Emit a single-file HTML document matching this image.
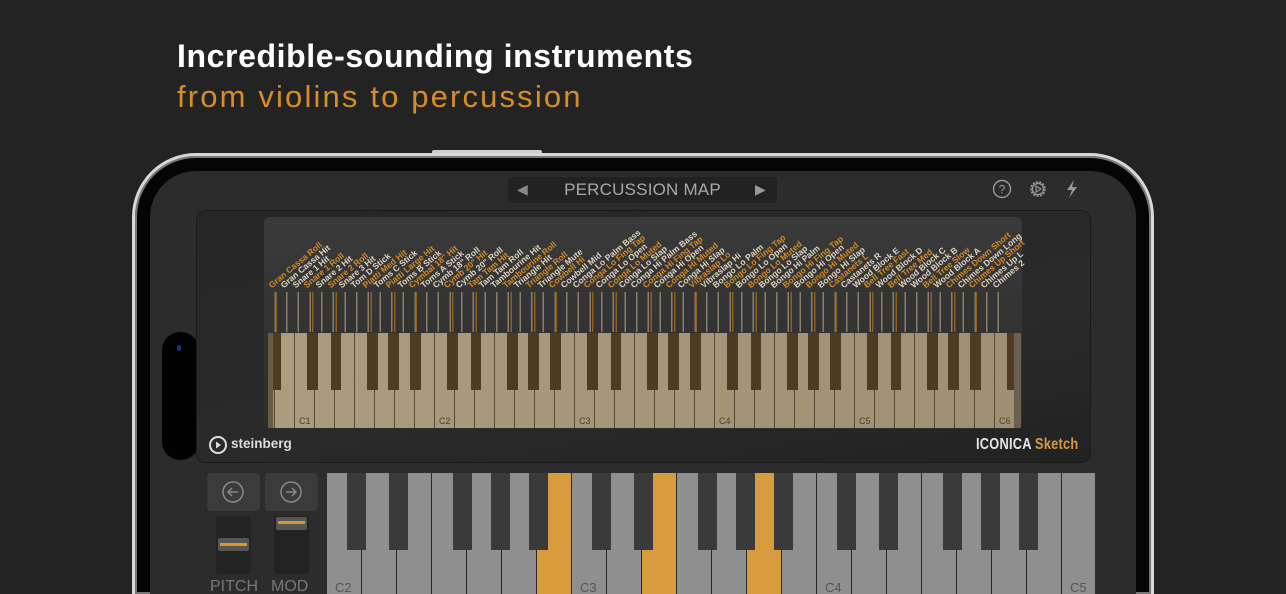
<!DOCTYPE html>
<html><head><meta charset="utf-8"><style>
*{margin:0;padding:0;box-sizing:border-box}
html,body{width:1286px;height:594px;overflow:hidden}
body{background:#232323;font-family:"Liberation Sans",sans-serif;position:relative}
.abs{position:absolute}
h1{position:absolute;left:177px;top:38px;font-size:32px;font-weight:bold;color:#fff;letter-spacing:0.6px}
h2{position:absolute;left:177px;top:79px;font-size:31px;font-weight:normal;color:#d68e25;letter-spacing:2.15px}
.frame{left:132px;top:153px;width:1022px;height:441px;border-radius:64px 64px 0 0;border:3px solid #d8d8dc;border-bottom:none;background:#050505;box-shadow:inset 0 0 0 2px #777}
.screen{left:150px;top:171px;width:986px;height:423px;border-radius:46px 46px 0 0;background:#2c2c2c}
.lbl{position:absolute;font-size:8.6px;font-weight:bold;white-space:nowrap;transform-origin:0 100%;transform:rotate(-40deg);line-height:9px}
.o{color:#d38a22}.w{color:#ddd3bd}
.note{position:absolute;font-size:9px;color:#4b3e2c;top:416px}
.bnote{position:absolute;font-size:13px;color:#555;top:581px;line-height:13px}
</style></head><body>
<h1>Incredible-sounding instruments</h1>
<h2>from violins to percussion</h2>
<div class="abs" style="left:432px;top:150px;width:110px;height:4px;background:#cfcfd3;border-radius:2px"></div>
<div class="abs frame"></div>
<div class="abs screen"></div>
<div class="abs" style="left:162px;top:332px;width:37px;height:128px;background:#020202;border-radius:18px"></div>
<div class="abs" style="left:177px;top:345px;width:4px;height:6px;background:#1d2f80;border-radius:2px"></div>
<!-- header -->
<div class="abs" style="left:508px;top:177px;width:269px;height:26px;background:#222;border-radius:3px"></div>
<div class="abs" style="left:517px;top:181px;color:#888;font-size:14px">◀</div>
<div class="abs" style="left:755px;top:181px;color:#999;font-size:14px">▶</div>
<div class="abs" style="left:508px;top:180px;width:269px;text-align:center;color:#a8a8a8;font-size:17px;letter-spacing:0.2px">PERCUSSION MAP</div>
<svg class="abs" style="left:990px;top:178px" width="95" height="22" viewBox="0 0 95 22">
<circle cx="12" cy="11" r="8.5" fill="none" stroke="#999" stroke-width="1.4"/>
<text x="12" y="15.5" font-size="12" fill="#999" text-anchor="middle" font-family="Liberation Sans">?</text>
<circle cx="48" cy="11" r="7" fill="none" stroke="#999" stroke-width="1.6" stroke-dasharray="2.2 1.2"/>
<circle cx="48" cy="11" r="5.5" fill="none" stroke="#999" stroke-width="1.2"/>
<path d="M46 8 L51 11 L46 14 Z" fill="none" stroke="#999" stroke-width="1.1"/>
<path d="M84 2 L77 12 L82 12 L79 20 L87 9 L82 9 Z" fill="#999"/>
</svg>
<!-- instrument panel -->
<div class="abs" style="left:196px;top:210px;width:895px;height:253px;background:linear-gradient(170deg,#262626,#2a2a2a 60%,#222);border-radius:10px;border:1px solid #1a1a1a"></div>
<div class="abs" style="left:264px;top:217px;width:758px;height:212px;background:linear-gradient(#3a3a3a,#333 50%,#2e2e2e);border-radius:6px"></div>
<!-- ticks -->
<div class="abs" style="left:269px;top:292px;width:736px;height:40px;background:repeating-linear-gradient(90deg,transparent 0,transparent 5.33px,#8a7f6c 5.33px,#8a7f6c 6.83px,transparent 6.83px,transparent 11.667px)"></div>
<div class="abs" style="left:268px;top:292px;width:740px;height:40px;background-image:linear-gradient(90deg,transparent 0,transparent 18px,#9a6418 18px,#9a6418 19.5px,transparent 19.5px,transparent 41.5px,#9a6418 41.5px,#9a6418 43px,transparent 43px,transparent 76.5px,#9a6418 76.5px,#9a6418 78px,transparent 78px,transparent 99.8px,#9a6418 99.8px,#9a6418 101.3px,transparent 101.3px,transparent 121.5px,#9a6418 121.5px,#9a6418 123px,transparent 123px);background-size:140px 40px;background-position:-114px 0;background-repeat:repeat-x;opacity:.9"></div>
<!-- upper keyboard -->
<div class="abs" style="left:268px;top:333px;width:752px;height:95px;background:#9b8a6e"></div>
<div class="abs" style="left:274px;top:333px;width:742px;height:95px;background-image:repeating-linear-gradient(90deg,#5a4a34 0,#5a4a34 1px,transparent 1px,transparent 20px),linear-gradient(90deg,#ac9c7e,#a09073);background-position:0 0"></div>
<div class="abs" style="left:268px;top:333px;width:748px;height:57px;background-image:linear-gradient(90deg,transparent 0,transparent 13px,#4d3b22 13px,#4d3b22 24px,transparent 24px,transparent 37px,#4d3b22 37px,#4d3b22 47px,transparent 47px,transparent 73px,#4d3b22 73px,#4d3b22 84px,transparent 84px,transparent 94px,#4d3b22 94px,#4d3b22 105px,transparent 105px,transparent 116px,#4d3b22 116px,#4d3b22 127px,transparent 127px);background-size:140px 57px;background-position:26px 0;background-repeat:repeat-x"></div>
<div class="abs" style="left:268px;top:333px;width:5px;height:95px;background:#6b5a42"></div>
<div class="abs" style="left:1014px;top:333px;width:7px;height:95px;background:#6b6050"></div>
<span class="note" style="left:299px">C1</span><span class="note" style="left:439px">C2</span><span class="note" style="left:579px">C3</span><span class="note" style="left:719px">C4</span><span class="note" style="left:859px">C5</span><span class="note" style="left:999px">C6</span>
<!-- labels -->
<div id="labels">
<span class="lbl o" style="left:273px;top:281px">Gran Cassa Roll</span>
<span class="lbl w" style="left:285px;top:281px">Gran Cassa Hit</span>
<span class="lbl w" style="left:297px;top:281px">Snare 1 Hit</span>
<span class="lbl o" style="left:308px;top:281px">Snare 1 Roll</span>
<span class="lbl w" style="left:320px;top:281px">Snare 2 Hit</span>
<span class="lbl o" style="left:332px;top:281px">Snare 2 Roll</span>
<span class="lbl w" style="left:343px;top:281px">Snare 3 Hit</span>
<span class="lbl w" style="left:355px;top:281px">Tom D Stick</span>
<span class="lbl o" style="left:367px;top:281px">Piatti Med Hit</span>
<span class="lbl w" style="left:378px;top:281px">Toms C Stick</span>
<span class="lbl o" style="left:390px;top:281px">Piatti Large Hit</span>
<span class="lbl w" style="left:402px;top:281px">Toms B Stick</span>
<span class="lbl o" style="left:413px;top:281px">Cymbal 18" Hit</span>
<span class="lbl w" style="left:425px;top:281px">Toms A Stick</span>
<span class="lbl w" style="left:437px;top:281px">Cymb 18" Roll</span>
<span class="lbl o" style="left:448px;top:281px">Cymb 20" Hit</span>
<span class="lbl w" style="left:460px;top:281px">Cymb 20" Roll</span>
<span class="lbl o" style="left:472px;top:281px">Tam Tam Hit</span>
<span class="lbl w" style="left:483px;top:281px">Tam Tam Roll</span>
<span class="lbl w" style="left:495px;top:281px">Tambourine Hit</span>
<span class="lbl o" style="left:507px;top:281px">Tambourine Roll</span>
<span class="lbl w" style="left:518px;top:281px">Triangle Hit</span>
<span class="lbl o" style="left:530px;top:281px">Triangle Roll</span>
<span class="lbl w" style="left:542px;top:281px">Triangle Mute</span>
<span class="lbl o" style="left:553px;top:281px">Cowbell Hi</span>
<span class="lbl w" style="left:565px;top:281px">Cowbell Mid</span>
<span class="lbl w" style="left:577px;top:281px">Conga Lo Palm Bass</span>
<span class="lbl o" style="left:588px;top:281px">Conga Lo Fing Tap</span>
<span class="lbl w" style="left:600px;top:281px">Conga Lo Open</span>
<span class="lbl o" style="left:612px;top:281px">Conga Lo Muted</span>
<span class="lbl w" style="left:623px;top:281px">Conga Lo Slap</span>
<span class="lbl w" style="left:635px;top:281px">Conga Hi Palm Bass</span>
<span class="lbl o" style="left:647px;top:281px">Conga Hi Fing Tap</span>
<span class="lbl w" style="left:658px;top:281px">Conga Hi Open</span>
<span class="lbl o" style="left:670px;top:281px">Conga Hi Muted</span>
<span class="lbl w" style="left:682px;top:281px">Conga Hi Slap</span>
<span class="lbl o" style="left:693px;top:281px">Vibraslap Lo</span>
<span class="lbl w" style="left:705px;top:281px">Vibraslap Hi</span>
<span class="lbl w" style="left:717px;top:281px">Bongo Lo Palm</span>
<span class="lbl o" style="left:728px;top:281px">Bongo Lo Fing Tap</span>
<span class="lbl w" style="left:740px;top:281px">Bongo Lo Open</span>
<span class="lbl o" style="left:752px;top:281px">Bongo Lo Muted</span>
<span class="lbl w" style="left:763px;top:281px">Bongo Lo Slap</span>
<span class="lbl w" style="left:775px;top:281px">Bongo Hi Palm</span>
<span class="lbl o" style="left:787px;top:281px">Bongo Hi Fing Tap</span>
<span class="lbl w" style="left:798px;top:281px">Bongo Hi Open</span>
<span class="lbl o" style="left:810px;top:281px">Bongo Hi Muted</span>
<span class="lbl w" style="left:822px;top:281px">Bongo Hi Slap</span>
<span class="lbl o" style="left:833px;top:281px">Castanets L</span>
<span class="lbl w" style="left:845px;top:281px">Castanets R</span>
<span class="lbl w" style="left:857px;top:281px">Wood Block E</span>
<span class="lbl o" style="left:868px;top:281px">Bell Tree Fast</span>
<span class="lbl w" style="left:880px;top:281px">Wood Block D</span>
<span class="lbl o" style="left:892px;top:281px">Bell Tree Med</span>
<span class="lbl w" style="left:903px;top:281px">Wood Block C</span>
<span class="lbl w" style="left:915px;top:281px">Wood Block B</span>
<span class="lbl o" style="left:927px;top:281px">Bell Tree Slow</span>
<span class="lbl w" style="left:938px;top:281px">Wood Block A</span>
<span class="lbl o" style="left:950px;top:281px">Chimes Down Short</span>
<span class="lbl w" style="left:962px;top:281px">Chimes Down Long</span>
<span class="lbl o" style="left:973px;top:281px">Chimes Up Short</span>
<span class="lbl w" style="left:985px;top:281px">Chimes Up L</span>
<span class="lbl w" style="left:997px;top:281px">Chimes 2</span>
</div>
<!-- logos -->
<svg class="abs" style="left:208px;top:435px" width="20" height="20"><circle cx="10" cy="10" r="8" fill="none" stroke="#ddd" stroke-width="2"/><path d="M8 6.5 L13 10 L8 13.5Z" fill="#ddd"/></svg>
<div class="abs" style="left:231px;top:436px;color:#ddd;font-size:13.5px;font-weight:bold">steinberg</div>
<div class="abs" style="left:976px;top:436px;font-size:16px;font-weight:bold;color:#e6e6e6;transform:scaleX(0.8);transform-origin:0 0;letter-spacing:0.3px;white-space:nowrap">ICONICA <span style="color:#d69a3f">Sketch</span></div>
<!-- controls -->
<div class="abs" style="left:207px;top:473px;width:53px;height:38px;background:#3b3b3b;border-radius:4px"></div>
<div class="abs" style="left:265px;top:473px;width:53px;height:38px;background:#3b3b3b;border-radius:4px"></div>
<svg class="abs" style="left:221px;top:480px" width="90" height="24"><circle cx="12" cy="12" r="10" fill="none" stroke="#888" stroke-width="1.5"/><path d="M17 12H7M11 8L7 12L11 16" fill="none" stroke="#888" stroke-width="1.5"/><circle cx="70" cy="12" r="10" fill="none" stroke="#888" stroke-width="1.5"/><path d="M65 12H75M71 8L75 12L71 16" fill="none" stroke="#888" stroke-width="1.5"/></svg>
<div class="abs" style="left:216px;top:516px;width:35px;height:58px;background:#232323;border-radius:3px"></div>
<div class="abs" style="left:274px;top:516px;width:35px;height:58px;background:#232323;border-radius:3px"></div>
<div class="abs" style="left:218px;top:538px;width:31px;height:13px;background:#555;border-radius:2px"></div>
<div class="abs" style="left:220px;top:543px;width:27px;height:3px;background:#d8982e"></div>
<div class="abs" style="left:276px;top:517px;width:31px;height:13px;background:#555;border-radius:2px"></div>
<div class="abs" style="left:278px;top:521px;width:27px;height:3px;background:#d8982e"></div>
<div class="abs" style="left:210px;top:580px;font-size:16px;line-height:14px;height:14px;overflow:hidden;color:#777">PITCH</div>
<div class="abs" style="left:271px;top:580px;font-size:16px;line-height:14px;height:14px;overflow:hidden;color:#777">MOD</div>
<!-- lower keyboard -->
<div class="abs" style="left:327px;top:473px;width:768px;height:121px;background-image:repeating-linear-gradient(90deg,#8e8f8e 0,#8e8f8e 34px,#2a2a2a 34px,#2a2a2a 35px)"></div>
<div class="abs" style="left:537px;top:473px;width:34px;height:121px;background:#d89b3e"></div>
<div class="abs" style="left:642px;top:473px;width:34px;height:121px;background:#d89b3e"></div>
<div class="abs" style="left:747px;top:473px;width:34px;height:121px;background:#d89b3e"></div>
<div class="abs" style="left:327px;top:473px;width:735px;height:77px;background-image:linear-gradient(90deg,transparent 0,transparent 20px,#3a3a3a 20px,#3a3a3a 39px,transparent 39px,transparent 62px,#3a3a3a 62px,#3a3a3a 81px,transparent 81px,transparent 126px,#3a3a3a 126px,#3a3a3a 145px,transparent 145px,transparent 164px,#3a3a3a 164px,#3a3a3a 183px,transparent 183px,transparent 202px,#3a3a3a 202px,#3a3a3a 221px,transparent 221px);background-size:245px 77px;background-repeat:repeat-x"></div>
<span class="bnote" style="left:335px">C2</span><span class="bnote" style="left:580px">C3</span><span class="bnote" style="left:825px">C4</span><span class="bnote" style="left:1070px">C5</span>
</body></html>
